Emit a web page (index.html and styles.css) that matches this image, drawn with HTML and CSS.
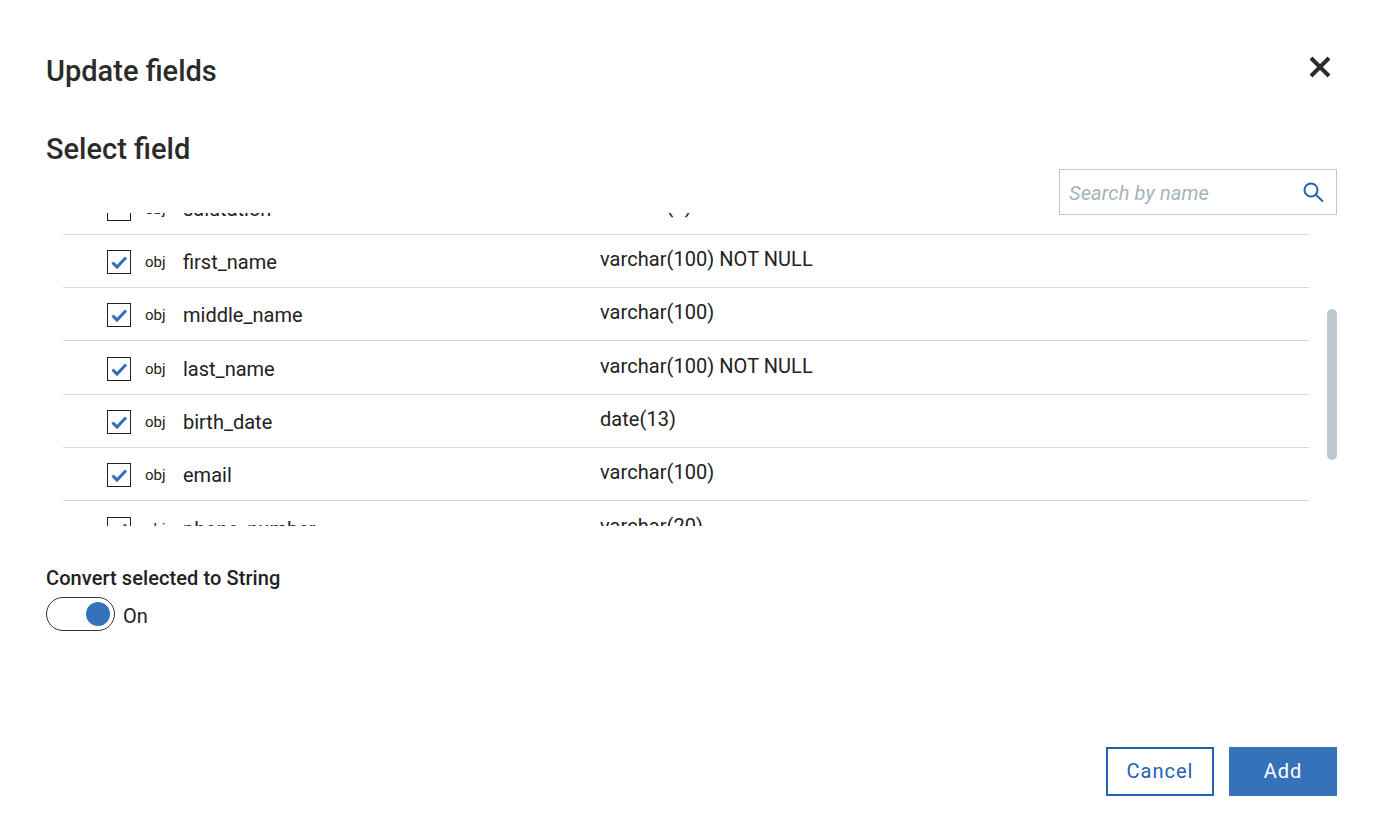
FILE: index.html
```html
<!DOCTYPE html>
<html lang="en">
<head>
    <meta charset="UTF-8">
    <title>Update fields</title>
    <link rel="stylesheet" href="styles.css">
</head>
<body>
    <div class="modal">
        <div class="modal-header">
            <h1>Update fields</h1>
            <button class="close-button" aria-label="Close">
                <svg width="24" height="24" viewBox="0 0 24 24"><path d="M3 3 L21 21 M21 3 L3 21" fill="none" stroke="#2b2b2b" stroke-width="4"/></svg>
            </button>
        </div>
        <h2>Select field</h2>
        <div class="search-row">
            <div class="search-box">
                <span class="search-text">Search by name</span>
                <svg width="22" height="22" viewBox="0 0 22 22"><circle cx="9" cy="9" r="6.5" fill="none" stroke="#1f63b0" stroke-width="2"/><path d="M13.8 13.8 L21 20.5" fill="none" stroke="#1f63b0" stroke-width="2"/></svg>
            </div>
        </div>
        <div class="field-area">
            <div class="field-scroll">
                <div class="field-list">
                    <div class="field-row">
                        <span class="checkbox"></span>
                        <span class="field-kind">obj</span>
                        <span class="field-name">salutation</span>
                        <span class="field-type">varchar(5)</span>
                    </div>
                    <div class="field-row">
                        <span class="checkbox"><svg width="24" height="24" viewBox="0 0 24 24"><path d="M5.5 12.5 L10 17 L19 7.5" fill="none" stroke="#2f6fba" stroke-width="3"/></svg></span>
                        <span class="field-kind">obj</span>
                        <span class="field-name">first_name</span>
                        <span class="field-type">varchar(100) NOT NULL</span>
                    </div>
                    <div class="field-row">
                        <span class="checkbox"><svg width="24" height="24" viewBox="0 0 24 24"><path d="M5.5 12.5 L10 17 L19 7.5" fill="none" stroke="#2f6fba" stroke-width="3"/></svg></span>
                        <span class="field-kind">obj</span>
                        <span class="field-name">middle_name</span>
                        <span class="field-type">varchar(100)</span>
                    </div>
                    <div class="field-row">
                        <span class="checkbox"><svg width="24" height="24" viewBox="0 0 24 24"><path d="M5.5 12.5 L10 17 L19 7.5" fill="none" stroke="#2f6fba" stroke-width="3"/></svg></span>
                        <span class="field-kind">obj</span>
                        <span class="field-name">last_name</span>
                        <span class="field-type">varchar(100) NOT NULL</span>
                    </div>
                    <div class="field-row">
                        <span class="checkbox"><svg width="24" height="24" viewBox="0 0 24 24"><path d="M5.5 12.5 L10 17 L19 7.5" fill="none" stroke="#2f6fba" stroke-width="3"/></svg></span>
                        <span class="field-kind">obj</span>
                        <span class="field-name">birth_date</span>
                        <span class="field-type">date(13)</span>
                    </div>
                    <div class="field-row">
                        <span class="checkbox"><svg width="24" height="24" viewBox="0 0 24 24"><path d="M5.5 12.5 L10 17 L19 7.5" fill="none" stroke="#2f6fba" stroke-width="3"/></svg></span>
                        <span class="field-kind">obj</span>
                        <span class="field-name">email</span>
                        <span class="field-type">varchar(100)</span>
                    </div>
                    <div class="field-row">
                        <span class="checkbox"><svg width="24" height="24" viewBox="0 0 24 24"><path d="M5.5 12.5 L10 17 L19 7.5" fill="none" stroke="#2f6fba" stroke-width="3"/></svg></span>
                        <span class="field-kind">obj</span>
                        <span class="field-name">phone_number</span>
                        <span class="field-type">varchar(20)</span>
                    </div>
                </div>
            </div>
            <div class="scroll-thumb"></div>
        </div>
        <div class="convert-label">Convert selected to String</div>
        <div class="toggle-row">
            <span class="toggle"><span class="toggle-knob"></span></span>
            <span class="toggle-text">On</span>
        </div>
        <div class="button-container">
            <button class="button button-outline">Cancel</button>
            <button class="button button-solid">Add</button>
        </div>
    </div>
</body>
</html>
```

FILE: styles.css
```css
body {
    font-family: Roboto, sans-serif;
    background-color: #fff;
    color: #222;
    margin: 0;
}
.modal {
    height: 840px;
    box-sizing: border-box;
    padding: 54px 43px 0 46px;
    overflow: hidden;
}
.modal-header {
    display: flex;
    justify-content: space-between;
    align-items: flex-start;
    height: 34px;
}
h1, h2 {
    margin: 0;
    font-size: 29px;
    line-height: 35px;
    font-weight: 500;
    color: #2b2b2b;
}
h2 {
    margin-top: 44px;
}
.close-button {
    padding: 0;
    margin: 1px 5px 0 0;
    border: none;
    background: none;
    display: block;
    height: 24px;
}
.search-row {
    display: flex;
    justify-content: flex-end;
    margin-top: 2px;
}
.search-box {
    width: 278px;
    height: 46px;
    box-sizing: border-box;
    border: 1px solid #c4c8cb;
    display: flex;
    align-items: center;
    justify-content: space-between;
    padding: 0 12px 0 9px;
}
.search-text {
    font-size: 20px;
    font-style: italic;
    letter-spacing: 0.15px;
    color: #a5b3bd;
    position: relative;
    top: 1px;
}
.field-area {
    display: flex;
    margin-top: -2px;
    padding-left: 17px;
}
.field-scroll {
    width: 1246px;
    height: 313px;
    overflow: hidden;
}
.field-list {
    margin-top: -31.6px;
}
.field-row {
    display: flex;
    align-items: center;
    height: 53.33px;
    box-sizing: border-box;
    border-bottom: 1px solid #d9d9d9;
    padding-left: 44px;
}
.checkbox {
    width: 24px;
    height: 24px;
    box-sizing: border-box;
    border: 1px solid #222;
    flex: none;
    position: relative;
    top: 1px;
}
.checkbox svg {
    display: block;
    margin: -1px;
}
.field-kind {
    width: 38px;
    margin-left: 14px;
    font-size: 15px;
    flex: none;
    position: relative;
    top: 1px;
}
.field-name {
    width: 417px;
    font-size: 20px;
    flex: none;
    position: relative;
    top: 1px;
}
.field-type {
    font-size: 20px;
    letter-spacing: 0.05px;
    position: relative;
    top: -2px;
}
.scroll-thumb {
    width: 10px;
    height: 151px;
    margin: 96px 0 0 18px;
    border-radius: 5px;
    background-color: #bfc8cf;
}
.convert-label {
    margin-top: 40px;
    font-size: 20px;
    letter-spacing: 0.08px;
    line-height: 24px;
    font-weight: 500;
}
.toggle-row {
    display: flex;
    align-items: center;
    gap: 8px;
    margin-top: 7px;
}
.toggle {
    width: 69px;
    height: 34px;
    box-sizing: border-box;
    border: 1px solid #333;
    border-radius: 17px;
    display: flex;
    justify-content: flex-end;
    align-items: center;
    padding-right: 4px;
}
.toggle-knob {
    width: 24px;
    height: 24px;
    border-radius: 50%;
    background-color: #3672ba;
}
.toggle-text {
    font-size: 20px;
    position: relative;
    top: 2px;
}
.button-container {
    display: flex;
    justify-content: flex-end;
    gap: 15px;
    margin-top: 116px;
}
.button {
    width: 108px;
    height: 49px;
    box-sizing: border-box;
    padding: 0 0 2px;
    font-family: Roboto, sans-serif;
    font-size: 20px;
    letter-spacing: 1px;
    border: 2px solid #1f63b0;
}
.button-outline {
    background-color: #fff;
    color: #1f63b0;
}
.button-solid {
    background-color: #3672ba;
    border-color: #3672ba;
    color: #fff;
}
```
